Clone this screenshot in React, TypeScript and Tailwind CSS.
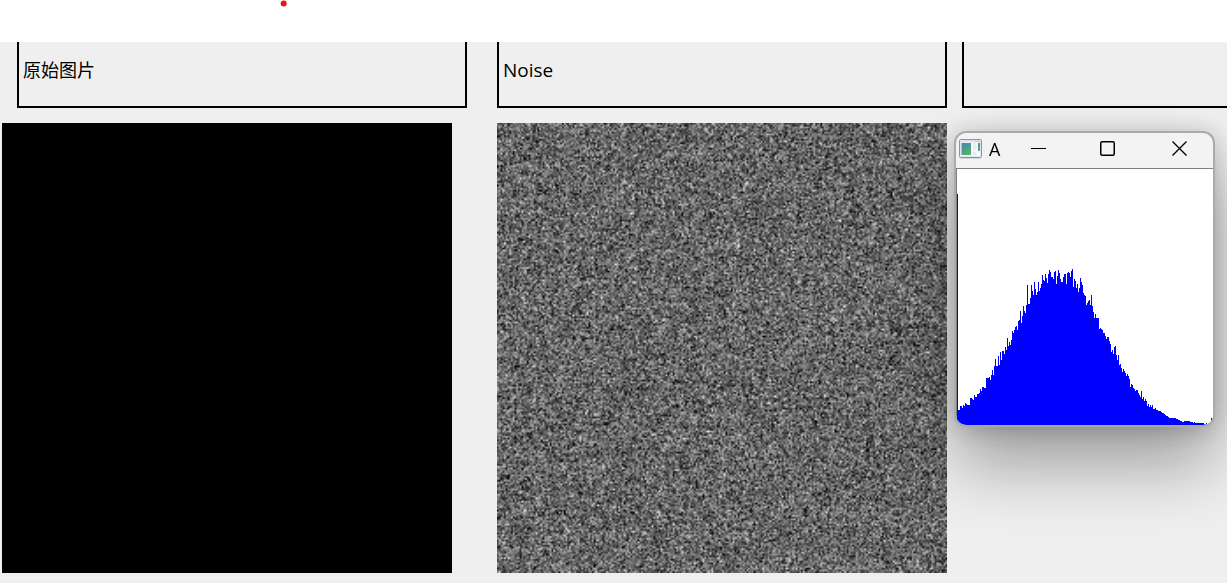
import { useEffect, useRef } from "react";

const HISTOGRAM: number[] = [
  231, 15, 15, 19, 19, 17, 20, 19, 22, 21, 20, 20, 20, 27, 27, 26, 25, 30, 28, 28, 31, 31, 32, 36,
  34, 38, 38, 37, 37, 47, 47, 47, 48, 45, 50, 55, 50, 59, 66, 59, 59, 69, 60, 73, 65, 74, 74, 71,
  78, 75, 87, 79, 83, 80, 85, 94, 92, 95, 98, 99, 95, 104, 105, 114, 102, 109, 119, 114, 112, 120,
  140, 121, 121, 127, 140, 134, 130, 143, 136, 130, 133, 143, 134, 137, 141, 150, 145, 144, 151,
  147, 142, 151, 155, 153, 148, 148, 146, 153, 154, 141, 149, 155, 152, 146, 143, 143, 148, 151,
  151, 141, 152, 153, 152, 148, 154, 156, 138, 146, 144, 137, 141, 133, 137, 147, 143, 140, 132,
  130, 129, 120, 122, 124, 125, 120, 130, 119, 113, 107, 111, 107, 107, 107, 96, 97, 96, 95, 92,
  92, 89, 86, 88, 88, 84, 81, 73, 75, 71, 78, 79, 70, 65, 70, 60, 61, 57, 53, 56, 54, 52, 49, 51,
  49, 46, 38, 41, 40, 37, 36, 34, 35, 35, 32, 30, 28, 34, 26, 28, 24, 26, 24, 19, 21, 18, 20, 18,
  20, 16, 16, 17, 15, 15, 14, 14, 14, 13, 12, 12, 11, 10, 9, 9, 8, 7, 7, 7, 7, 7, 7, 7, 6, 6, 5, 5,
  4, 4, 3, 3, 4, 4, 4, 4, 4, 4, 3, 3, 3, 2, 3, 2, 2, 2, 2, 2, 2, 2, 2, 2, 1, 1, 2, 1, 1, 1, 1, 7,
];

const NOISE_SIZE = 256;
const NOISE_MEAN = 102;
const NOISE_DEVIATION = 43;

function createRandom(seed: number) {
  let state = seed;
  return () => {
    state = (state + 0x6d2b79f5) | 0;
    let t = Math.imul(state ^ (state >>> 15), 1 | state);
    t = (t + Math.imul(t ^ (t >>> 7), 61 | t)) ^ t;
    return ((t ^ (t >>> 14)) >>> 0) / 4294967296;
  };
}

function NoiseImage() {
  const ref = useRef<HTMLCanvasElement>(null);

  useEffect(() => {
    const context = ref.current?.getContext("2d");
    if (!context) return;
    const random = createRandom(7);
    const image = context.createImageData(NOISE_SIZE, NOISE_SIZE);
    for (let i = 0; i < image.data.length; i += 4) {
      const normal =
        Math.sqrt(-2 * Math.log(1 - random())) * Math.cos(2 * Math.PI * random());
      const value = NOISE_MEAN + NOISE_DEVIATION * normal;
      image.data[i] = value;
      image.data[i + 1] = value;
      image.data[i + 2] = value;
      image.data[i + 3] = 255;
    }
    context.putImageData(image, 0, 0);
  }, []);

  return (
    <canvas
      ref={ref}
      width={NOISE_SIZE}
      height={NOISE_SIZE}
      role="img"
      aria-label="Noise"
      className="block aspect-square w-[450px] bg-[#666666]"
    />
  );
}

function Histogram() {
  return (
    <svg viewBox="0 0 256 256" shapeRendering="crispEdges" className="block aspect-square w-full bg-white">
      {HISTOGRAM.map((height, level) => (
        <rect key={level} x={level} y={256 - height} width="1" height={height} fill="#0000ff" />
      ))}
    </svg>
  );
}

function AppIcon() {
  return (
    <svg width="23" height="20" viewBox="0 0 23 20" className="shrink-0">
      <defs>
        <linearGradient id="pane" x1="0" y1="0" x2="0.5" y2="1">
          <stop offset="0" stopColor="#4a86b4" />
          <stop offset="1" stopColor="#52b06e" />
        </linearGradient>
      </defs>
      <rect x="0.5" y="0.5" width="22" height="18" rx="1" fill="#dfe5ea" stroke="#8b949d" />
      <path d="M16 2.3h5" stroke="#b4bcc5" strokeWidth="0.8" />
      <rect x="2" y="3.5" width="19" height="13.5" fill="#f8fafb" />
      <rect x="2.5" y="4" width="9.5" height="12" fill="url(#pane)" />
      <rect x="14" y="4" width="3.5" height="7" fill="#ececec" />
      <rect x="14" y="12.5" width="3.5" height="3.5" fill="#ececec" />
      <rect x="19" y="4" width="2" height="8" fill="url(#pane)" />
      <path d="M1 19.5h21" stroke="#d5d8dc" />
    </svg>
  );
}

function HistogramWindow() {
  return (
    <section
      aria-label="A"
      className="absolute top-[89px] left-[954px] w-[261px] overflow-hidden rounded-xl border-2 border-[#aaaaaa] bg-[#f3f3f3] shadow-[0_38px_68px_rgba(0,0,0,0.34),0_2px_24px_rgba(0,0,0,0.2)]"
    >
      <header className="flex h-[35px] items-center pb-[3px] pl-[3px]">
        <AppIcon />
        <h2 className="ml-[7px] w-5 font-['Open_Sans','Noto_Sans',sans-serif] text-lg leading-6">A</h2>
        <div className="flex flex-1">
          <button type="button" aria-label="Minimize" className="flex h-8 w-[60px] items-center justify-center">
            <svg width="16" height="16" viewBox="0 0 16 16">
              <path d="M0 7.5h15" stroke="#000" />
            </svg>
          </button>
          <button type="button" aria-label="Maximize" className="flex h-8 w-[78px] items-center justify-center">
            <svg width="16" height="16" viewBox="0 0 16 16" fill="none">
              <rect x="0.75" y="0.75" width="13.5" height="13.5" rx="1.5" stroke="#000" strokeWidth="1.5" />
            </svg>
          </button>
          <button type="button" aria-label="Close" className="flex h-8 flex-1 items-center justify-center">
            <svg width="16" height="16" viewBox="0 0 16 16">
              <path d="M0.5 0.5l14 14M14.5 0.5l-14 14" stroke="#000" strokeWidth="1.4" />
            </svg>
          </button>
        </div>
      </header>
      <div className="border-t border-l border-[#808080]">
        <Histogram />
      </div>
    </section>
  );
}

export default function App() {
  return (
    <div className="relative flex min-h-screen flex-col overflow-hidden bg-[#efefef] text-black">
      <div className="relative h-[42px] bg-white">
        <svg width="8" height="8" viewBox="0 0 8 8" className="absolute top-0 left-[280px]">
          <circle cx="3.7" cy="3.5" r="3" fill="#e8141c" />
        </svg>
      </div>
      <main className="relative flex-1 font-['Open_Sans','Noto_Sans_CJK_SC',sans-serif]">
        <div className="flex pl-[17px]">
          <div className="flex h-[66px] w-[450px] shrink-0 items-center border-2 border-t-0 border-black px-1 pb-2">
            <p className="text-lg leading-6">原始图片</p>
          </div>
          <div className="ml-[30px] flex h-[66px] w-[450px] shrink-0 items-center border-2 border-t-0 border-black px-1 pb-2">
            <p className="text-[19px] leading-6">Noise</p>
          </div>
          <div className="ml-[15px] h-[66px] flex-1 border-b-2 border-l-2 border-black" />
        </div>
        <div className="flex gap-[45px] pt-[15px] pb-[10px] pl-[2px]">
          <div role="img" aria-label="原始图片" className="aspect-square w-[450px] bg-black" />
          <NoiseImage />
        </div>
        <HistogramWindow />
      </main>
    </div>
  );
}
